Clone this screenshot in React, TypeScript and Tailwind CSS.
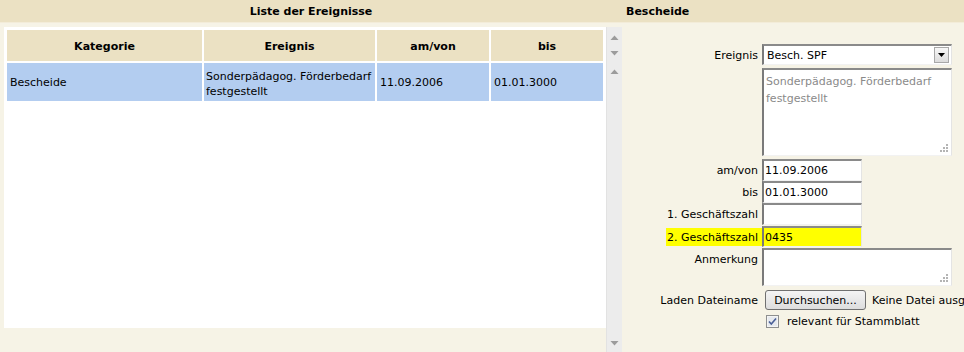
import React from 'react';

function Arrow({ up }: { up?: boolean }) {
  return (
    <svg width="9" height="5" viewBox="0 0 9 5" className="block">
      <path d={up ? 'M0.5 5L4.5 0.5L8.5 5Z' : 'M0.5 0L8.5 0L4.5 4.5Z'} fill="#9c9c9c" />
    </svg>
  );
}

function Grip() {
  return (
    <svg width="9" height="9" viewBox="0 0 9 9" className="absolute right-[2px] bottom-[2px]">
      <g fill="#b4b4b4">
        <rect x="6" y="0" width="2" height="2" />
        <rect x="3" y="3" width="2" height="2" />
        <rect x="6" y="3" width="2" height="2" />
        <rect x="0" y="6" width="2" height="2" />
        <rect x="3" y="6" width="2" height="2" />
        <rect x="6" y="6" width="2" height="2" />
      </g>
    </svg>
  );
}

const inset =
  'border-t-2 border-l-2 border-r border-b border-t-[#8a8a8a] border-l-[#7a7a7a] border-r-[#e4e4e4] border-b-[#f2f2f2]';

function Row({
  label,
  children,
  h,
  yellow,
  top,
  className = '',
}: {
  label?: string;
  children: React.ReactNode;
  h: string;
  yellow?: boolean;
  top?: boolean;
  className?: string;
}) {
  return (
    <div className={`flex ${h} ${className}`}>
      <div className={`w-[140px] shrink-0 flex justify-end ${top ? 'items-start pt-[4px]' : 'items-center pt-[3px]'}`}>
        {label &&
          (yellow ? (
            <span className="h-full flex items-center bg-[#ffff00] pl-[1px] pr-[4px] -mt-[3px] pt-[3px]">{label}</span>
          ) : (
            <span className="pr-[4px]">{label}</span>
          ))}
      </div>
      {children}
    </div>
  );
}

function Field({ value, yellow }: { value?: string; yellow?: boolean }) {
  return (
    <div className={`w-[100px] h-full ${inset} ${yellow ? 'bg-[#ffff00]' : 'bg-white'} flex items-center pl-[1px] pt-[2px]`}>
      {value}
    </div>
  );
}

export default function App() {
  const cols = ['Kategorie', 'Ereignis', 'am/von', 'bis'];

  return (
    <div className="h-[352px] w-[964px] overflow-hidden bg-[#f6f3e6] text-[11px] text-black font-['DejaVu_Sans',sans-serif] flex flex-col">
      {/* header bar */}
      <div className="h-[23px] shrink-0 flex items-center pt-[3px] bg-[#ebe1c3] border-b border-[#f3ecd9] font-bold">
        <div className="w-[622px] text-center">Liste der Ereignisse</div>
        <div className="pl-[4px]">Bescheide</div>
      </div>

      <div className="flex flex-1 min-h-0">
        {/* left list */}
        <div className="w-[622px] shrink-0 flex pt-[4px]">
          <div className="ml-[4px] w-[602px] h-[301px] bg-white pt-[3px] pl-[3px]">
            <div className="grid grid-cols-[195px_171px_112px_112px] gap-[2px]">
              {cols.map((c) => (
                <div key={c} className="h-[31px] bg-[#ebe1c3] font-bold flex items-center justify-center pt-[3px]">
                  {c}
                </div>
              ))}
              <div className="h-[38px] bg-[#b3cdf0] flex items-center px-[3px] pt-[3px]">Bescheide</div>
              <div className="h-[38px] bg-[#b3cdf0] flex items-center pl-[2px] leading-[15px] pt-[4px]">
                Sonderpädagog. Förderbedarf festgestellt
              </div>
              <div className="h-[38px] bg-[#b3cdf0] flex items-center px-[3px] pt-[3px]">11.09.2006</div>
              <div className="h-[38px] bg-[#b3cdf0] flex items-center px-[3px] pt-[3px]">01.01.3000</div>
            </div>
          </div>
          {/* scrollbar */}
          <div className="w-[16px] bg-[#ececec] border-l border-[#e2e2e2] flex flex-col items-center pt-[2px] pb-[1px]">
            <div className="h-[16px] flex items-center justify-center">
              <Arrow up />
            </div>
            <div className="h-[16px] flex items-center justify-center">
              <Arrow />
            </div>
            <div className="h-[18px] flex items-center justify-center pt-[2px]">
              <Arrow up />
            </div>
            <div className="flex-1" />
            <div className="h-[16px] flex items-center justify-center">
              <Arrow />
            </div>
          </div>
        </div>

        {/* right form */}
        <div className="flex-1 min-w-0 flex flex-col pt-[21px]">
          <Row label="Ereignis" h="h-[21px]">
            <div className={`w-[190px] h-full ${inset} bg-white flex items-center justify-between pl-[3px] pr-[2px]`}>
              <span className="pt-[3px]">Besch. SPF</span>
              <div className="w-[15px] h-[16px] border border-[#a8a8a8] bg-gradient-to-b from-[#f7f7f7] to-[#dcdcdc] flex items-center justify-center">
                <svg width="7" height="4" viewBox="0 0 7 4">
                  <path d="M0 0H7L3.5 4Z" fill="#000" />
                </svg>
              </div>
            </div>
          </Row>
          <Row h="h-[88px]" className="mt-[3px]">
            <div className={`relative w-[190px] h-full ${inset} bg-white text-[#8a8a8a] leading-[17px] pl-[2px] pt-[3px]`}>
              Sonderpädagog. Förderbedarf
              <br />
              festgestellt
              <Grip />
            </div>
          </Row>
          <Row label="am/von" h="h-[22px]" className="mt-[3px]">
            <Field value="11.09.2006" />
          </Row>
          <Row label="bis" h="h-[22px]">
            <Field value="01.01.3000" />
          </Row>
          <Row label="1. Geschäftszahl" h="h-[22px]">
            <Field />
          </Row>
          <Row label="2. Geschäftszahl" h="h-[21px]" yellow className="mt-[1px]">
            <Field value="0435" yellow />
          </Row>
          <Row label="Anmerkung" h="h-[38px]" top className="mt-[1px]">
            <div className={`relative w-[190px] h-full ${inset} bg-white`}>
              <Grip />
            </div>
          </Row>
          <Row label="Laden Dateiname" h="h-[20px]" className="mt-[4px]">
            <div className="flex items-center min-w-0 overflow-hidden whitespace-nowrap">
              <div className="ml-[3px] w-[101px] h-[20px] shrink-0 rounded-[3px] border border-[#707070] bg-gradient-to-b from-[#f4f4f4] to-[#dddddd] flex items-center justify-center pt-[2px]">
                Durchsuchen...
              </div>
              <span className="ml-[6px] pt-[3px]">Keine Datei ausgewählt.</span>
            </div>
          </Row>
          <div className="flex items-center h-[14px] mt-[4px] pl-[144px]">
            <svg width="13" height="13" viewBox="0 0 13 13" className="block shrink-0">
              <rect x="0.5" y="0.5" width="12" height="12" fill="#f4f4f4" stroke="#8e8f8f" />
              <rect x="2" y="2" width="9" height="9" fill="#e6e9ee" />
              <path d="M3 6.5L5.3 9L10 3.5" fill="none" stroke="#4a5f97" strokeWidth="1.6" />
            </svg>
            <span className="ml-[8px] pt-[2px]">relevant für Stammblatt</span>
          </div>
        </div>
      </div>
    </div>
  );
}
